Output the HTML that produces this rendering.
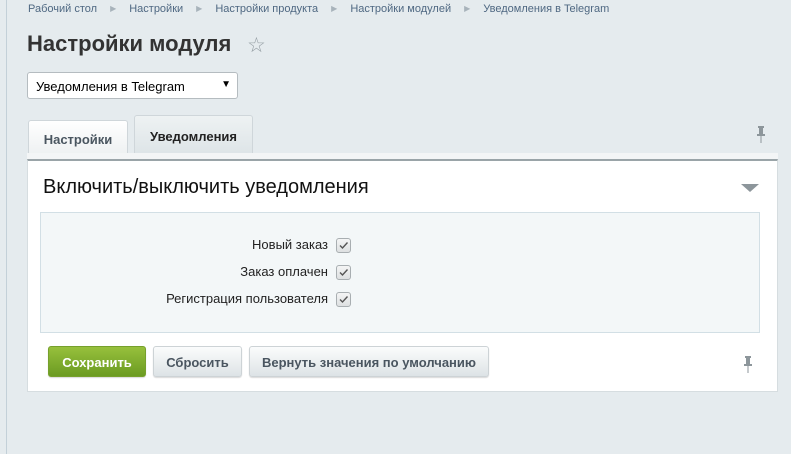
<!DOCTYPE html>
<html><head><meta charset="utf-8"><style>
*{box-sizing:border-box;margin:0;padding:0}
body{width:791px;height:454px;overflow:hidden;background:#e5ebee;font-family:"Liberation Sans",sans-serif;position:relative}
.lb{position:absolute;left:6px;top:0;width:1px;height:454px;background:#c3d0d8}
.bc{position:absolute;top:3px;left:28px;font-size:11px;color:#4f6882;white-space:nowrap}
.bc span{margin-right:13px}
.bc i{font-style:normal;color:#a8b3bb;font-size:8px;margin-right:13px;position:relative;top:-1px}
h1{position:absolute;left:27px;top:31px;font-size:22px;font-weight:bold;color:#333}
.star{position:absolute;left:247px;top:33px;font-size:21px;color:#959ea4}
.sel{position:absolute;left:27px;top:72px;width:211px;height:27px;background:#fff;border:1px solid #b5bcc0;border-radius:3px;font-size:13px;color:#000;padding:6px 0 0 8px}
.sel b{position:absolute;right:6px;top:6px;font-size:10px}
.tab{position:absolute;font-size:13px;font-weight:bold;border:1px solid #cfd6da;border-bottom:none;border-radius:3px 3px 0 0;text-align:center}
.t1{left:28px;top:120px;width:100px;height:34px;background:linear-gradient(#fff,#eef1f2);color:#4a5660;padding-top:11px}
.t2{left:134px;top:115px;width:119px;height:40px;background:linear-gradient(#eef2f3,#dde4e7);color:#222;padding-top:13px}
.pin{position:absolute;width:10px;height:17px}
.panel{position:absolute;left:27px;top:159px;width:751px;height:233px;background:#fff;border:1px solid #d6dde0;border-top:2px solid #9aa4a8}
.topline{position:absolute;left:27px;top:153px;width:751px;height:6px;background:#f3f5f6}
.ph{position:absolute;left:15px;top:15px;font-size:20px;color:#111}
.tri{position:absolute;left:713px;top:23px;width:0;height:0;border-left:9px solid transparent;border-right:9px solid transparent;border-top:8px solid #8d969b}
.inner{position:absolute;left:12px;top:51px;width:720px;height:121px;background:#f3f7f8;border:1px solid #d2dfe5}
.row{position:absolute;left:0;width:287px;text-align:right;font-size:13px;color:#222;white-space:nowrap}
.cb{position:absolute;left:295px;width:15px;height:15px;border:1px solid #a8aeb1;border-radius:3px;background:linear-gradient(#f4f5f5,#dde0e1)}
.btn{position:absolute;top:185px;height:31px;border-radius:3px;font-size:13px;font-weight:bold;text-align:center;padding-top:8px;border:1px solid #cdd3d6;background:linear-gradient(#fbfcfc,#dde3e6);color:#4a5560;box-shadow:0 1px 1px rgba(0,0,0,.15)}
.save{background:linear-gradient(#97c03c,#6b9b22);color:#fff;border-color:#76a02c}
</style></head><body>
<div class="lb"></div>
<div class="bc"><span>Рабочий стол</span><i>▶</i><span>Настройки</span><i>▶</i><span>Настройки продукта</span><i>▶</i><span>Настройки модулей</span><i>▶</i><span>Уведомления в Telegram</span></div>
<h1>Настройки модуля</h1>
<div class="star">☆</div>
<div class="sel">Уведомления в Telegram<b>▼</b></div>
<div class="tab t1">Настройки</div>
<div class="tab t2">Уведомления</div>
<svg class="pin" style="left:756px;top:126px" viewBox="0 0 10 17"><rect x="2" y="0" width="6" height="2" fill="#8d969b"/><rect x="3" y="2" width="4" height="6" fill="#8d969b"/><rect x="1" y="8" width="8" height="2" fill="#8d969b"/><rect x="4.5" y="10" width="1" height="7" fill="#8d969b"/></svg>
<div class="topline"></div>
<div class="panel">
<div class="ph">Включить/выключить уведомления</div>
<div class="tri"></div>
<div class="inner">
<div class="row" style="top:24px">Новый заказ</div><div class="cb" style="top:25px"><svg width="13" height="13" viewBox="0 0 13 13"><path d="M3 6.5l2.5 2.5 5-5.5" stroke="#555" stroke-width="1.4" fill="none"/></svg></div>
<div class="row" style="top:51px">Заказ оплачен</div><div class="cb" style="top:52px"><svg width="13" height="13" viewBox="0 0 13 13"><path d="M3 6.5l2.5 2.5 5-5.5" stroke="#555" stroke-width="1.4" fill="none"/></svg></div>
<div class="row" style="top:78px">Регистрация пользователя</div><div class="cb" style="top:79px"><svg width="13" height="13" viewBox="0 0 13 13"><path d="M3 6.5l2.5 2.5 5-5.5" stroke="#555" stroke-width="1.4" fill="none"/></svg></div>
</div>
<div class="btn save" style="left:20px;width:98px">Сохранить</div>
<div class="btn" style="left:125px;width:89px">Сбросить</div>
<div class="btn" style="left:221px;width:240px">Вернуть значения по умолчанию</div>
<svg class="pin" style="left:715px;top:195px" viewBox="0 0 10 17"><rect x="2" y="0" width="6" height="2" fill="#8d969b"/><rect x="3" y="2" width="4" height="6" fill="#8d969b"/><rect x="1" y="8" width="8" height="2" fill="#8d969b"/><rect x="4.5" y="10" width="1" height="7" fill="#8d969b"/></svg>
</div>
</body></html>
